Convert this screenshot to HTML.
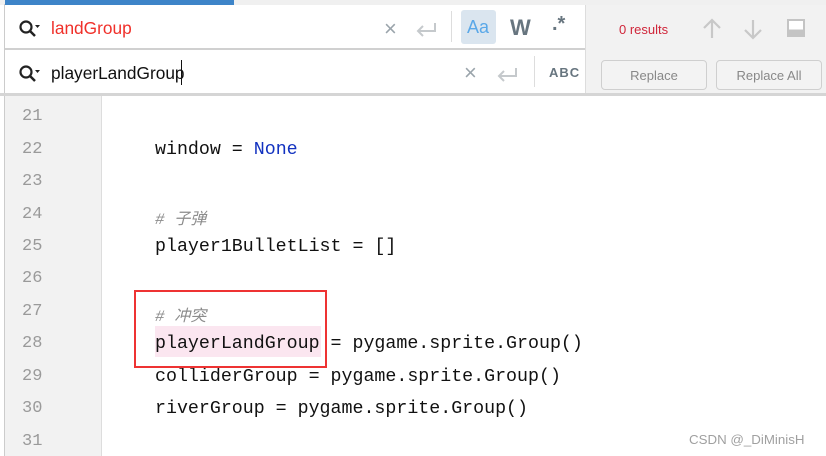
<!DOCTYPE html>
<html><head><style>
body{margin:0;width:826px;height:456px;overflow:hidden;background:#fff;font-family:"Liberation Sans",sans-serif;position:relative}
.a{position:absolute}
.mono{font-family:"Liberation Mono","Noto Sans CJK SC",monospace;font-size:18.3px;color:#111;white-space:pre}
.ln{position:absolute;left:22px;font-family:"Liberation Mono",monospace;font-size:17px;color:#9a9a9a}
.cm{color:#8c8c8c;font-style:italic}
</style></head><body>
<div class="a" style="left:0;top:0;width:826px;height:5px;background:#f0f0f0"></div>
<div class="a" style="left:5px;top:0;width:229px;height:5px;background:#3d84c8"></div>
<div class="a" style="left:4px;top:4px;width:1px;height:452px;background:#ccc"></div>
<div class="a" style="left:5px;top:5px;width:580px;height:43px;background:#fff"></div>
<div class="a" style="left:5px;top:48px;width:580px;height:2px;background:#d0d0d0"></div>
<div class="a" style="left:5px;top:50px;width:580px;height:43px;background:#fff"></div>
<div class="a" style="left:0;top:93px;width:826px;height:3px;background:#d5d5d5"></div>
<div class="a" style="left:585px;top:5px;width:241px;height:88px;background:#f2f2f2;border-left:1px solid #ddd"></div>
<svg class="a" style="left:18px;top:19px" width="24" height="22"><circle cx="8" cy="8" r="5.5" fill="none" stroke="#222" stroke-width="2.2"/><path d="M12 12l5 5" stroke="#222" stroke-width="2.5"/><path d="M17 6h5l-2.5 3z" fill="#222"/></svg>
<svg class="a" style="left:18px;top:64px" width="24" height="22"><circle cx="8" cy="8" r="5.5" fill="none" stroke="#222" stroke-width="2.2"/><path d="M12 12l5 5" stroke="#222" stroke-width="2.5"/><path d="M17 6h5l-2.5 3z" fill="#222"/></svg>
<div class="a" style="left:51px;top:18px;font-size:17.3px;color:#f0302a">landGroup</div>
<div class="a" style="left:51px;top:63px;font-size:17.3px;color:#111">playerLandGroup</div>
<div class="a" style="left:181px;top:60px;width:1px;height:25px;background:#111"></div>
<div class="a" style="left:384px;top:16px;font-size:22px;color:#9aa4ab">×</div>
<div class="a" style="left:464px;top:60px;font-size:22px;color:#9aa4ab">×</div>
<svg class="a" style="left:415px;top:21px" width="22" height="16"><path d="M20 2v8H4M8 5l-5 5 5 5" fill="none" stroke="#c5c9cc" stroke-width="2"/></svg>
<svg class="a" style="left:496px;top:66px" width="22" height="16"><path d="M20 2v8H4M8 5l-5 5 5 5" fill="none" stroke="#c5c9cc" stroke-width="2"/></svg>
<div class="a" style="left:451px;top:11px;width:1px;height:31px;background:#ddd"></div>
<div class="a" style="left:534px;top:56px;width:1px;height:31px;background:#ddd"></div>
<div class="a" style="left:461px;top:10px;width:35px;height:34px;background:#dae5ef;border-radius:3px"></div>
<div class="a" style="left:467px;top:17px;font-size:18px;color:#5aa8e8">Aa</div>
<div class="a" style="left:510px;top:15px;font-size:22px;font-weight:bold;color:#67757f">W</div>
<div class="a" style="left:552px;top:13px;font-size:20px;font-weight:bold;color:#67757f">.*</div>
<div class="a" style="left:549px;top:65px;font-size:13px;font-weight:bold;color:#67757f;letter-spacing:1px">ABC</div>
<div class="a" style="left:619px;top:22px;font-size:13px;color:#d0263a">0 results</div>
<svg class="a" style="left:700px;top:17px" width="24" height="24"><path d="M12 3v18M4 11l8-8 8 8" fill="none" stroke="#c8c8c8" stroke-width="2.2"/></svg>
<svg class="a" style="left:741px;top:17px" width="24" height="24"><path d="M12 3v18M4 13l8 8 8-8" fill="none" stroke="#c8c8c8" stroke-width="2.2"/></svg>
<div class="a" style="left:787px;top:19px;width:14px;height:14px;border:2px solid #c4c4c4;background:linear-gradient(#fff 60%,#c4c4c4 60%)"></div>
<div class="a" style="left:601px;top:60px;width:104px;height:28px;border:1px solid #cfcfcf;border-radius:4px;background:#f3f3f3;font-size:13px;color:#888;text-align:center;line-height:30px">Replace</div>
<div class="a" style="left:716px;top:60px;width:104px;height:28px;border:1px solid #cfcfcf;border-radius:4px;background:#f3f3f3;font-size:13px;color:#888;text-align:center;line-height:30px">Replace All</div>
<div class="a" style="left:5px;top:96px;width:96px;height:360px;background:#f2f2f2;border-right:1px solid #ddd"></div>
<div class="ln" style="top:107px">21</div>
<div class="ln" style="top:140px">22</div>
<div class="ln" style="top:172px">23</div>
<div class="ln" style="top:205px">24</div>
<div class="ln" style="top:237px">25</div>
<div class="ln" style="top:269px">26</div>
<div class="ln" style="top:302px">27</div>
<div class="ln" style="top:334px">28</div>
<div class="ln" style="top:367px">29</div>
<div class="ln" style="top:399px">30</div>
<div class="ln" style="top:432px">31</div>
<div class="a" style="left:155px;top:326px;width:166px;height:31px;background:#fbe6f0"></div>
<div class="a mono" style="left:155px;top:140px">window = <span style="color:#1232c0">None</span></div>
<div class="a mono cm" style="left:155px;top:205px;font-size:16px"># 子弹</div>
<div class="a mono" style="left:155px;top:237px">player1BulletList = []</div>
<div class="a mono cm" style="left:155px;top:302px;font-size:16px"># 冲突</div>
<div class="a mono" style="left:155px;top:334px">playerLandGroup = pygame.sprite.Group()</div>
<div class="a mono" style="left:155px;top:367px">colliderGroup = pygame.sprite.Group()</div>
<div class="a mono" style="left:155px;top:399px">riverGroup = pygame.sprite.Group()</div>
<div class="a" style="left:134px;top:290px;width:189px;height:74px;border:2px solid #ee3333"></div>
<div class="a" style="left:689px;top:432px;font-size:13.3px;color:#a0a0a0">CSDN @_DiMinisH</div>
</body></html>
